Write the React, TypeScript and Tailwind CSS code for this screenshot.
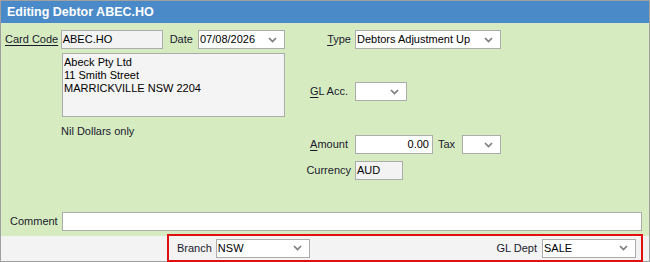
import React from "react";

const Chevron = () => (
  <svg width="9" height="6" viewBox="0 0 9 6" className="shrink-0">
    <path d="M1 1l3.5 3.5L8 1" fill="none" stroke="#7d7d7d" strokeWidth="1.7" />
  </svg>
);

const Select = ({ value, className }: { value?: string; className: string }) => (
  <div
    className={`flex h-[19px] shrink-0 items-center justify-between border border-[#acacac] bg-white pl-px pr-[7px] text-black ${className}`}
  >
    <span>{value}</span>
    <Chevron />
  </div>
);

const Field = ({
  value,
  className,
}: {
  value?: string;
  className: string;
}) => (
  <div className={`flex h-[19px] shrink-0 items-center border border-[#acacac] px-px text-black ${className}`}>
    {value}
  </div>
);

export default function App() {
  return (
    <div className="flex h-[262px] w-[650px] flex-col border border-[#a0a0a0] font-['Liberation_Sans',Arial,sans-serif] text-[11px] text-[#1a1a2e]">
      {/* title */}
      <div className="flex h-[22px] shrink-0 items-center bg-[#4b8ac8] pl-[6px] text-[12.5px] font-bold text-white">
        Editing Debtor ABEC.HO
      </div>

      {/* form body */}
      <div className="flex flex-1 flex-col bg-[#d6ecc0] pl-[4px] pt-[7px] pb-[5px]">
        <div className="flex">
          {/* left column */}
          <div className="flex w-[280px] flex-col">
            <div className="flex items-center">
              <span className="w-[57px] underline underline-offset-2">Card Code</span>
              <Field value="ABEC.HO" className="w-[102px] bg-[#f3f3f3]" />
              <span className="ml-[7px] w-[29px]">Date</span>
              <Select value="07/08/2026" className="w-[87px]" />
            </div>
            <div className="ml-[57px] mt-[4px] h-[64px] w-[223px] border border-[#acacac] bg-[#f4f4f4] pl-px pt-[2px] leading-[13px] text-black">
              <div>Abeck Pty Ltd</div>
              <div>11 Smith Street</div>
              <div>MARRICKVILLE NSW 2204</div>
            </div>
            <div className="ml-[56px] mt-[8px] leading-[13px]">Nil Dollars only</div>
          </div>

          {/* right column */}
          <div className="ml-[16px] flex flex-col">
            <div className="flex items-center">
              <span className="mr-[4px] w-[50px] text-right">
                <span className="underline underline-offset-2">T</span>ype
              </span>
              <Select value="Debtors Adjustment Up" className="w-[146px]" />
            </div>
            <div className="mt-[33px] flex items-center">
              <span className="mr-[4px] w-[50px] text-right pr-[3px]">
                <span className="underline underline-offset-2">G</span>L Acc.
              </span>
              <Select className="w-[52px]" />
            </div>
            <div className="mt-[34px] flex items-center">
              <span className="mr-[4px] w-[50px] text-right pr-[3px]">
                <span className="underline underline-offset-2">A</span>mount
              </span>
              <Field value="0.00" className="w-[78px] justify-end bg-white pr-[3px]" />
              <span className="ml-[5px] w-[24px]">Tax</span>
              <Select className="w-[39px]" />
            </div>
            <div className="mt-[7px] flex items-center">
              <span className="mr-[4px] w-[50px] text-right">Currency</span>
              <Field value="AUD" className="w-[48px] bg-[#f3f3f3]" />
            </div>
          </div>
        </div>

        {/* comment */}
        <div className="mt-auto flex items-center">
          <span className="w-[57px] pl-[5px]">Comment</span>
          <Field className="w-[580px] bg-white" />
        </div>
      </div>

      {/* footer */}
      <div className="h-[25px] shrink-0 bg-[#f3f3f3]">
        <div className="-mt-[2px] ml-[166px] flex h-[28px] w-[476px] items-center justify-between border-2 border-[#e01010] pl-[8px] pr-[5px]">
          <div className="flex items-center">
            <span className="mr-[4px]">Branch</span>
            <Select value="NSW" className="w-[94px]" />
          </div>
          <div className="flex items-center">
            <span className="mr-[5px]">GL Dept</span>
            <Select value="SALE" className="w-[94px]" />
          </div>
        </div>
      </div>
    </div>
  );
}
